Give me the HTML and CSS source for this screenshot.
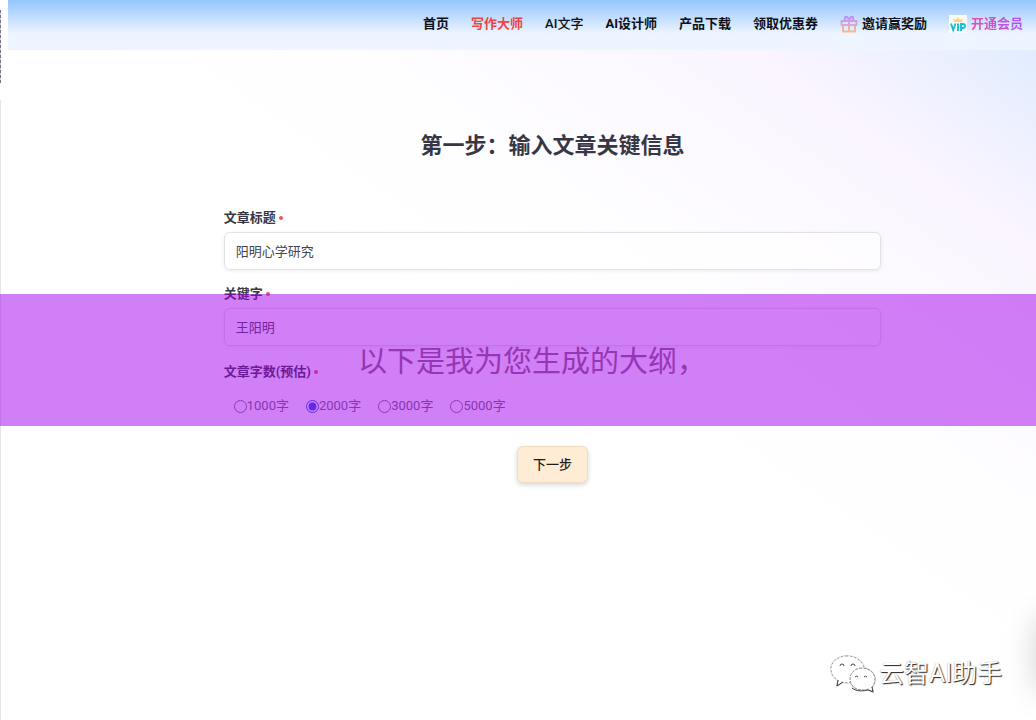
FILE: index.html
```html
<!DOCTYPE html>
<html lang="zh-CN">
<head>
<meta charset="utf-8">
<meta name="viewport" content="width=device-width, initial-scale=1">
<title>写作大师</title>
<link rel="stylesheet" href="styles.css">
</head>
<body>
<div class="app">
  <aside class="rail"><div class="rail-marks"></div></aside>
  <div class="page">
    <header class="topbar">
      <nav class="nav">
        <a href="#">首页</a>
        <a href="#" class="active">写作大师</a>
        <a href="#" class="light">AI文字</a>
        <a href="#">AI设计师</a>
        <a href="#">产品下载</a>
        <a href="#">领取优惠券</a>
        <a href="#" class="with-icon">
          <svg width="18" height="18" viewBox="0 0 18 18" fill="none" stroke="url(#gift)" stroke-width="2" stroke-linejoin="round" stroke-linecap="round" aria-hidden="true">
            <defs><linearGradient id="gift" gradientUnits="userSpaceOnUse" x1="0" y1="1" x2="0" y2="17"><stop offset="0" stop-color="#b78cfb"/><stop offset=".4" stop-color="#d5a0df"/><stop offset="1" stop-color="#f7bd83"/></linearGradient></defs>
            <path d="M1.500 6h15v4h-15zM3 10v6.500h12V10M9 6v10M9 6C5 6 4 4 5 2.500S8.500 2 9 6c.5-4 3-5 4-3.500S13 6 9 6"/>
          </svg>
          邀请赢奖励
        </a>
        <a href="#" class="with-icon">
          <svg width="18" height="18" viewBox="0 0 18 18" aria-hidden="true">
            <rect width="18" height="18" fill="#f8fcff"/>
            <path d="M5 7 4 3.500l3 1.500L9 2.500 11 5l3-1.500L13 7z" fill="#fbd56b"/>
            <path d="M2 8.500l2.200 6.500L6.500 8.500M9 8.500V16M12 16V9h2a1.900 1.900 0 0 1 0 4h-2" fill="none" stroke="#18bfd5" stroke-width="1.900"/>
          </svg>
          <span class="vip">开通会员</span>
        </a>
      </nav>
    </header>
    <main class="main">
      <form class="form">
        <h1 class="title">第一步：输入文章关键信息</h1>
        <label class="label" for="topic">文章标题<i class="req"></i></label>
        <input class="text" id="topic" type="text" value="阳明心学研究">
        <label class="label" for="keys">关键字<i class="req"></i></label>
        <input class="text" id="keys" type="text" value="王阳明">
        <fieldset class="count">
          <legend class="label">文章字数(预估)<i class="req"></i></legend>
          <div class="options">
            <label><input type="radio" name="count">1000字</label>
            <label><input type="radio" name="count" checked>2000字</label>
            <label><input type="radio" name="count">3000字</label>
            <label><input type="radio" name="count">5000字</label>
          </div>
        </fieldset>
        <button class="next" type="button">下一步</button>
      </form>
    </main>
  </div>
  <div class="caption">以下是我为您生成的大纲，</div>
  <div class="edge-glow"></div>
  <div class="watermark">
    <svg width="48" height="40" viewBox="0 0 48 40" aria-hidden="true">
      <defs>
        <path id="big" d="M18 2C9 2 2 8 2 15c0 5 3 9 7 11l-1 6 6-4c2 1 5 1 8 0 8-1 13-6 13-13S27 2 18 2z"/>
        <path id="small" d="M33 14c-7 0-12 5-12 11s5 11 12 11c2 0 4 0 6-1l5 3-1-5c2-2 3-5 3-8 0-6-6-11-13-11z"/>
      </defs>
      <g fill="none" stroke="#e2e2e2" stroke-width="2"><use href="#big"/><use href="#small"/></g>
      <g fill="#fff" stroke-width="1">
        <use href="#big" stroke="#999" stroke-dasharray="2 2"/>
        <use href="#small" stroke="#8a8a8a" stroke-dasharray="3 1"/>
      </g>
      <path d="M23 34c5 4 12 3 16 2l5 2-1-5M9 26l-1 6 6-4" fill="none" stroke="#444"/>
      <path d="M11 12a2 2 0 0 1 4 0M22 12a2 2 0 0 1 4 0M26 23a2 2 0 0 1 3 0M35 23a2 2 0 0 1 3 0" fill="none" stroke="#444"/>
    </svg>
    <span>云智AI助手</span>
  </div>
</div>
</body>
</html>
```
FILE: styles.css
```css
* { box-sizing: border-box; }
body {
  margin: 0;
  font-family: Roboto, "Noto Sans CJK SC", sans-serif;
  font-size: 13px;
  line-height: 20px;
  color: #373744;
}
.app {
  position: relative;
  display: flex;
  min-height: 100vh;
  overflow: hidden;
  background: #fff;
}
.rail {
  width: 1px;
  padding-top: 10px;
  background: linear-gradient(#fff 100px, #e5e5e8 100px);
}
.rail-marks {
  height: 73px;
  background: repeating-linear-gradient(#777488 0 3px, #d5d4dd 3px 5px);
}
.page {
  flex: 1;
  display: flex;
  flex-direction: column;
  background: linear-gradient(to top right, #fff 50%, #fefeff 62%, #faf5ff 83%, #dbeafe 100%);
}
.topbar {
  margin-left: 7px;
  height: 50px;
  padding: 0 13px;
  background: linear-gradient(#93c5fd 0, #eef5ff 34px, #eef5ff 100%);
}
.nav {
  display: flex;
  justify-content: flex-end;
  align-items: center;
  gap: 22px;
  height: 48px;
}
.nav a {
  color: #0c1018;
  font-weight: 700;
  text-decoration: none;
  white-space: nowrap;
}
.nav .active { color: #f04444; }
.nav .light { font-weight: 500; }
.nav .with-icon { display: flex; align-items: center; gap: 4px; }
.vip {
  color: transparent;
  background: linear-gradient(90deg, #e84ca6, #a855f7);
  background-clip: text;
  -webkit-background-clip: text;
}
.main { padding: 80px 0 40px 68px; }
.form {
  display: flex;
  flex-direction: column;
  width: 68%;
  margin: 0 auto;
}
.title {
  margin: 0 0 46px;
  font-size: 22px;
  line-height: 32px;
  font-weight: 700;
  text-align: center;
}
.label {
  display: flex;
  align-items: center;
  gap: 3px;
  padding: 0;
  margin-bottom: 4px;
  font-weight: 700;
}
.req {
  width: 4px;
  height: 4px;
  border-radius: 50%;
  background: #f25555;
}
.text {
  height: 38px;
  margin-bottom: 14px;
  padding: 0 11px 2px;
  border: 1px solid #e2e1e8;
  border-radius: 6px;
  background: rgba(255, 255, 255, .5);
  box-shadow: 0 1px 4px rgba(0, 0, 0, .07);
  color: #45454f;
  font: inherit;
}
.count { margin: 2px 0 0; padding: 0; border: 0; }
.options {
  display: flex;
  gap: 17px;
  padding: 10px 10px 0;
  color: #6b6b78;
}
.options label { display: flex; align-items: center; }
.options input {
  width: 13px;
  height: 13px;
  margin: 0;
  accent-color: #1557e8;
}
.next {
  align-self: center;
  height: 37px;
  margin-top: 30px;
  padding: 0 15px;
  border: 1px solid #eedcc5;
  border-radius: 6px;
  background: #ffecd5;
  box-shadow: 0 2px 5px rgba(0, 0, 0, .16);
  color: #201c18;
  font: inherit;
  font-weight: 500;
}
.caption {
  position: absolute;
  left: 0;
  right: 0;
  top: 294px;
  height: 132px;
  padding-left: 28px;
  background: rgba(163, 0, 237, .5);
  color: #9635b5;
  font-family: "Noto Sans CJK SC", sans-serif;
  font-size: 29px;
  line-height: 130px;
  text-align: center;
  pointer-events: none;
}
.edge-glow {
  position: absolute;
  right: -24px;
  top: 620px;
  width: 20px;
  height: 70px;
  box-shadow: 0 0 32px rgba(0, 0, 0, .25);
}
.watermark {
  position: absolute;
  right: 34px;
  bottom: 26px;
  display: flex;
  align-items: center;
  gap: 2px;
  color: #fff;
  font-size: 25px;
  line-height: 40px;
  text-shadow: 1px 1px 1px #222, 0 0 1px #999;
}
```
